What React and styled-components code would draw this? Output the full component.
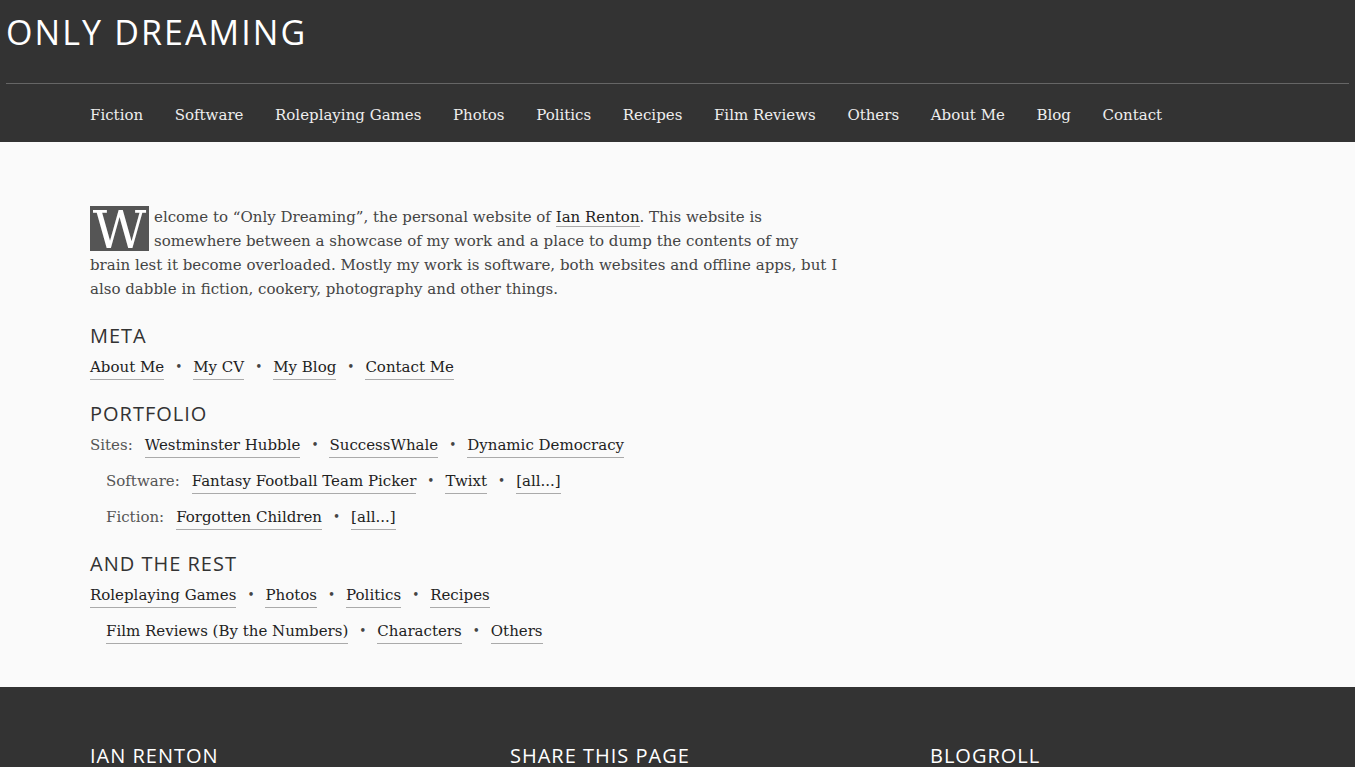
import React from 'react';
import styled, { createGlobalStyle } from 'styled-components';

const GlobalStyle = createGlobalStyle`
  html, body {
    margin: 0;
    padding: 0;
    background: #fafafa;
  }
  body {
    font-family: "DejaVu Serif", "Liberation Serif", serif;
    color: #444;
  }
`;

const Header = styled.header`
  background: #333;
  padding: 0 6px;
`;

const SiteTitle = styled.h1`
  margin: 0;
  height: 84px;
  box-sizing: border-box;
  padding-top: 9px;
  font-family: "Open Sans", sans-serif;
  font-weight: 400;
  font-size: 34px;
  letter-spacing: 2.1px;
  color: #fff;
  border-bottom: 1px solid #666;
`;

const Nav = styled.nav`
  display: flex;
  gap: 31.6px;
  height: 58px;
  box-sizing: border-box;
  align-items: center;
  padding: 3px 0 0 84px;
`;

const NavLink = styled.a`
  color: #eee;
  font-size: 15px;
  text-decoration: none;
`;

const Main = styled.main`
  padding: 63px 90px 38px;
  max-width: 750px;
  font-size: 15px;
  line-height: 24px;
`;

const Intro = styled.p`
  margin: 0 0 22px;
`;

const DropCap = styled.span`
  float: left;
  width: 59px;
  height: 45px;
  margin: 1px 5px 0 0;
  background: #555;
  color: #fff;
  font-size: 52px;
  line-height: 48px;
  text-align: center;
`;

const Link = styled.a`
  color: #222;
  text-decoration: none;
  border-bottom: 1px solid #aaa;
`;

const Heading = styled.h2`
  margin: 0;
  font-family: "Open Sans", sans-serif;
  font-weight: 400;
  font-size: 20px;
  letter-spacing: 1px;
  line-height: 26px;
  color: #333;
`;

const Section = styled.section`
  margin-bottom: 16px;
  &:last-child {
    margin-bottom: 0;
  }
`;

const Row = styled.div`
  display: flex;
  align-items: center;
  height: 36px;
  padding-left: ${p => (p.$indent ? '16px' : '0')};
`;

const Label = styled.span`
  color: #555;
  margin-right: 12px;
`;

const Bullet = styled.span`
  color: #444;
  margin: 0 11px;
  font-size: 12px;
`;

const Footer = styled.footer`
  background: #333;
  display: grid;
  grid-template-columns: repeat(3, 420px);
  padding: 55px 90px 0;
  height: 80px;
`;

const FooterHeading = styled.h3`
  margin: 0;
  font-family: "Open Sans", sans-serif;
  font-weight: 400;
  font-size: 20px;
  letter-spacing: 1px;
  line-height: 28px;
  color: #fff;
`;

const navItems = ['Fiction', 'Software', 'Roleplaying Games', 'Photos', 'Politics', 'Recipes', 'Film Reviews', 'Others', 'About Me', 'Blog', 'Contact'];

function LinkRow({ label, links, indent }) {
  return (
    <Row $indent={indent}>
      {label && <Label>{label}</Label>}
      {links.map((l, i) => (
        <React.Fragment key={l}>
          {i > 0 && <Bullet>•</Bullet>}
          <Link href="#">{l}</Link>
        </React.Fragment>
      ))}
    </Row>
  );
}

export default function App() {
  return (
    <>
      <GlobalStyle />
      <Header>
        <SiteTitle>ONLY DREAMING</SiteTitle>
        <Nav>
          {navItems.map(n => <NavLink key={n} href="#">{n}</NavLink>)}
        </Nav>
      </Header>
      <Main>
        <Intro>
          <DropCap>W</DropCap>elcome to “Only Dreaming”, the personal website of <Link href="#">Ian Renton</Link>. This website is somewhere between a showcase of my work and a place to dump the contents of my brain lest it become overloaded. Mostly my work is software, both websites and offline apps, but I also dabble in fiction, cookery, photography and other things.
        </Intro>
        <Section>
          <Heading>META</Heading>
          <LinkRow links={['About Me', 'My CV', 'My Blog', 'Contact Me']} />
        </Section>
        <Section>
          <Heading>PORTFOLIO</Heading>
          <LinkRow label="Sites:" links={['Westminster Hubble', 'SuccessWhale', 'Dynamic Democracy']} />
          <LinkRow indent label="Software:" links={['Fantasy Football Team Picker', 'Twixt', '[all...]']} />
          <LinkRow indent label="Fiction:" links={['Forgotten Children', '[all...]']} />
        </Section>
        <Section>
          <Heading>AND THE REST</Heading>
          <LinkRow links={['Roleplaying Games', 'Photos', 'Politics', 'Recipes']} />
          <LinkRow indent links={['Film Reviews (By the Numbers)', 'Characters', 'Others']} />
        </Section>
      </Main>
      <Footer>
        <FooterHeading>IAN RENTON</FooterHeading>
        <FooterHeading>SHARE THIS PAGE</FooterHeading>
        <FooterHeading>BLOGROLL</FooterHeading>
      </Footer>
    </>
  );
}
